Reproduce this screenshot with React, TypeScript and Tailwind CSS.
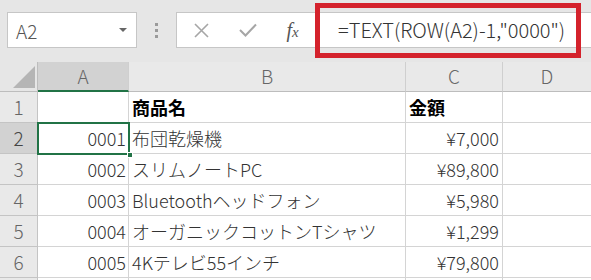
import React from "react";

const FONT = { fontFamily: '"Noto Sans CJK JP", "Noto Sans", sans-serif' };

type Row = { n: number; a: string; b: string; c: string; bold?: boolean };

const rows: Row[] = [
  { n: 1, a: "", b: "商品名", c: "金額", bold: true },
  { n: 2, a: "0001", b: "布団乾燥機", c: "¥7,000" },
  { n: 3, a: "0002", b: "スリムノートPC", c: "¥89,800" },
  { n: 4, a: "0003", b: "Bluetoothヘッドフォン", c: "¥5,980" },
  { n: 5, a: "0004", b: "オーガニックコットンTシャツ", c: "¥1,299" },
  { n: 6, a: "0005", b: "4Kテレビ55インチ", c: "¥79,800" },
  { n: 7, a: "", b: "", c: "" },
];

function Toolbar() {
  return (
    <div className="relative h-[62px] bg-[#e6e6e6] flex items-start pt-[12px]">
      <div className="ml-[7px] w-[130px] h-[36px] bg-white border border-[#c6c6c6] flex items-center justify-between pl-[8px] pr-[9px]">
        <span className="text-[19px] text-[#555] leading-none font-light" style={FONT}>A2</span>
        <svg width="8" height="4" viewBox="0 0 8 4"><path d="M0 0 L8 0 L4 4 Z" fill="#666" /></svg>
      </div>
      <div className="w-[39px] h-[36px] flex flex-col items-center justify-center gap-[3px]">
        <div className="w-[3px] h-[3px] bg-[#9a9a9a]" />
        <div className="w-[3px] h-[3px] bg-[#9a9a9a]" />
        <div className="w-[3px] h-[3px] bg-[#9a9a9a]" />
      </div>
      <div className="flex-1 h-[36px] bg-white border border-[#c6c6c6] border-r-0 flex items-center">
        <div className="w-[48px] flex justify-center">
          <svg width="15" height="15" viewBox="0 0 15 15"><path d="M1 1 L14 14 M14 1 L1 14" stroke="#a6a6a6" strokeWidth="1.6" /></svg>
        </div>
        <div className="w-[45px] flex justify-center">
          <svg width="18" height="14" viewBox="0 0 18 14"><path d="M1 7 L6.5 12.5 L17 1.5" stroke="#a6a6a6" strokeWidth="2" fill="none" /></svg>
        </div>
        <div className="w-[45px] flex justify-center">
          <span className="text-[20px] italic text-[#555]" style={{ fontFamily: '"Liberation Serif", serif' }}>
            f<span className="text-[15px]">x</span>
          </span>
        </div>
        <span className="ml-[23px] text-[20px] text-[#333] leading-none font-light" style={FONT}>=TEXT(ROW(A2)-1,"0000")</span>
      </div>
      <div className="absolute left-[315px] top-[3px] w-[266px] h-[55px] border-[5px] border-[#d4222c]" />
    </div>
  );
}

function HeaderRow() {
  const hc = "h-[30px] flex items-center justify-center border-r border-[#cfcfcf] text-[19px] text-[#666] font-light";
  return (
    <div className="flex h-[30px]" style={FONT}>
      <div className="relative w-[38px] h-[30px] bg-[#e6e6e6] border-r border-[#bdbdbd] border-b border-[#bdbdbd]">
        <svg className="absolute left-[13px] top-[4px]" width="22" height="22" viewBox="0 0 22 22"><path d="M0 22 L22 0 L22 22 Z" fill="#b5b5b5" /></svg>
      </div>
      <div className={`${hc} w-[91px] bg-[#d2d2d2] border-b-2 border-b-[#217346] text-[#555]`}>A</div>
      <div className={`${hc} w-[277px] bg-[#e9e9e9] border-b border-b-[#bdbdbd]`}>B</div>
      <div className={`${hc} w-[97px] bg-[#e9e9e9] border-b border-b-[#bdbdbd]`}>C</div>
      <div className={`${hc} flex-1 bg-[#e9e9e9] border-b border-b-[#bdbdbd] border-r-0`}>D</div>
    </div>
  );
}

function DataRow({ r }: { r: Row }) {
  const sel = r.n === 2;
  const cell = "h-[31px] flex items-center border-r border-b border-[#d4d4d4] text-[18px] overflow-hidden whitespace-nowrap";
  const txt = r.bold ? "font-bold text-black" : "font-light text-[#333]";
  return (
    <div className="flex h-[31px]" style={FONT}>
      <div
        className={`w-[38px] h-[31px] flex items-center justify-center border-r border-b border-[#c4c4c4] text-[19px] font-light ${
          sel ? "bg-[#d2d2d2] text-[#444]" : "bg-[#e9e9e9] text-[#666]"
        }`}
      >
        {r.n === 7 ? "" : r.n}
      </div>
      <div className={`${cell} w-[91px] justify-end pr-[2px] bg-white font-light text-[#333]`}>{r.a}</div>
      <div className={`${cell} w-[277px] pl-[3px] bg-white ${txt}`}>{r.b}</div>
      <div className={`${cell} w-[97px] bg-white ${txt} ${r.bold ? "pl-[3px]" : "justify-end pr-[3px]"}`}>{r.c}</div>
      <div className={`${cell} flex-1 bg-white border-r-0`} />
    </div>
  );
}

export default function App() {
  return (
    <div className="relative w-[591px] h-[280px] overflow-hidden bg-white">
      <Toolbar />
      <HeaderRow />
      {rows.map((r) => (
        <DataRow key={r.n} r={r} />
      ))}
      <div className="absolute left-[37px] top-[122px] w-[93px] h-[33px] border-2 border-[#217346] z-10" />
      <div className="absolute left-[127px] top-[152px] w-[6px] h-[6px] bg-[#217346] border border-white z-20" />
    </div>
  );
}
